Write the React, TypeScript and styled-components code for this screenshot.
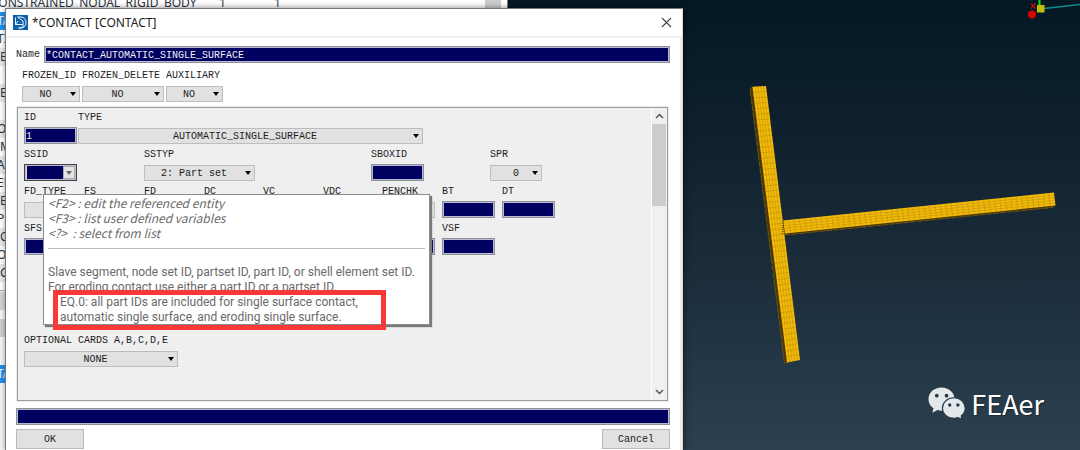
import React, { useId } from "react";
import styled, { createGlobalStyle, css } from "styled-components";

const mono = `"Liberation Mono", monospace`;
const sans = `"Noto Sans", "Open Sans", sans-serif`;
const hintSans = `"Noto Sans CJK SC", "Noto Sans", sans-serif`;
const navy = "#000060";

const GlobalStyle = createGlobalStyle`
  * { box-sizing: border-box; }
  body { margin: 0; background: #051826; }
  input, select, button { font: inherit; color: inherit; border-radius: 0; margin: 0; }
`;

const Desktop = styled.div`
  position: relative;
  min-height: 100vh;
  overflow: hidden;
  display: grid;
  grid-template-columns: 683fr 397fr;
  font: 10px/16px ${mono};
  color: #1c1c1c;
`;

const Backdrop = styled.div`
  position: absolute;
  inset: 0;
  display: grid;
  grid-template-columns: 508fr 572fr;
`;

const Browser = styled.aside`
  display: flex;
  flex-direction: column;
  overflow: hidden;
  background: #fff;
  border-right: 1px solid #777;
  font: 12px/18px ${sans};
  color: #2b3440;
  min-width: 0;
`;

const TreeTable = styled.table`
  border-collapse: collapse;
  width: 100%;
  margin-top: -6px;
`;

const TreeRow = styled.tr<{ $active?: boolean; $shade?: boolean }>`
  height: 18px;
  background: ${(p) => (p.$active ? "#1e90f0" : p.$shade ? "#e9e9e9" : "#fff")};
  color: ${(p) => (p.$active ? "#e4f1ff" : "inherit")};
  td { padding: 0; width: 55px; white-space: nowrap; }
  td:first-child { width: 219px; max-width: 219px; text-indent: -9px; }
  td:last-child { width: auto; }
`;

const TreeText = styled.span<{ $clipped: boolean }>`
  display: block;
  text-indent: ${(p) => (p.$clipped ? -3 : 0)}px;
`;

const TreeFooter = styled.div`
  flex: 1;
  display: flex;
  flex-direction: column;
  margin-top: 8px;
  border-top: 1px solid #aaa;
  background: #f1f5fa;
`;

const FooterBar = styled.div<{ $tone: string; $gapTop: number }>`
  height: 18px;
  margin-top: ${(p) => p.$gapTop}px;
  background: ${(p) => p.$tone};
  color: #e4f1ff;
`;

const BrowserScroll = styled.div`
  position: absolute;
  top: 0;
  left: 485px;
  width: 16px;
  height: 100%;
  background: #cdcdcd;
`;

const Viewport = styled.main`
  position: relative;
  min-width: 0;
  background: linear-gradient(#041725, #172836 50%, #2c404f);
`;

const Scene = styled.svg`
  display: block;
  position: absolute;
  inset: 0;
  width: 100%;
  height: 100%;
`;

const Watermark = styled.div`
  position: absolute;
  right: 36px;
  bottom: 27px;
  display: flex;
  align-items: center;
  gap: 5px;
  font: 27px/38px "Noto Sans CJK SC", sans-serif;
  color: #fff;
  text-shadow: 1px 1px 1px #1a2833;
`;

const Dialog = styled.section`
  position: relative;
  display: flex;
  flex-direction: column;
  margin: 8px 0 0 5px;
  background: #fff;
  border: 1px solid #777;
  border-right-color: #d8d8d8;
  border-bottom: 0;
  box-shadow: 1px 0 6px rgba(0, 0, 0, 0.5);
`;

const TitleBar = styled.header`
  display: flex;
  align-items: center;
  gap: 4px;
  height: 29px;
  padding: 0 10px 0 7px;
  border-bottom: 2px solid #efefef;
  h1 { flex: 1; margin: 0; font: 12px/18px ${sans}; color: #222; }
`;

const CloseButton = styled.button`
  display: flex;
  padding: 0;
  border: 0;
  background: none;
  color: #444;
`;

const DialogBody = styled.form`
  flex: 1;
  display: flex;
  flex-direction: column;
  padding: 8px 10px 1px 10px;
  border-right: 2px solid #eee;
`;

const NameRow = styled.div`
  display: flex;
  align-items: center;
  gap: 4px;
`;

const inputFrame = css`
  display: block;
  height: 17px;
  width: 100%;
  min-width: 0;
  background: ${navy};
  color: #f2f2f2;
  border: 1px solid #8f8f99;
  box-shadow: inset 0 0 0 1px #b9b9d2;
  outline: 0;
`;

const TextInput = styled.input`
  ${inputFrame}
  padding: 2px 1px 0;
`;

const SwitchRow = styled.div`
  display: grid;
  grid-template-columns: 58px 82px 57px;
  gap: 2px;
  margin: 3px 0 0 6px;
`;

const FieldRow = styled.div<{ $columns: string }>`
  display: grid;
  grid-template-columns: ${(p) => p.$columns};
  margin-bottom: 1px;
`;

const FieldBox = styled.div<{ $width: number; $bare?: boolean }>`
  display: flex;
  flex-direction: column;
  justify-content: ${(p) => (p.$bare ? "flex-end" : "flex-start")};
  width: ${(p) => p.$width}px;
  label { height: 19px; line-height: 19px; white-space: nowrap; }
`;

const SelectFrame = styled.span`
  position: relative;
  display: block;
  padding-top: 1px;
  &::after {
    content: "";
    position: absolute;
    right: 4px;
    top: 7px;
    border: 3px solid transparent;
    border-top: 4px solid #000;
    border-bottom: 0;
    pointer-events: none;
  }
`;

const Select = styled.select<{ $numeric?: boolean }>`
  appearance: none;
  display: block;
  width: 100%;
  height: 16px;
  padding: 1px ${(p) => (p.$numeric ? 0 : 11)}px 0 0;
  border: 1px solid #bdbdbd;
  background: #e1e1e1;
  text-align: center;
  text-align-last: center;
  line-height: 13px;
`;

const Combo = styled.span`
  ${inputFrame}
  display: flex;
  align-items: center;
  padding: 0 1px;
  border-color: #444;
  input { flex: 1; width: 0; height: 13px; padding: 0; border: 0; border-left: 1px solid #ddd; background: none; outline: 0; }
  button { display: flex; align-items: center; justify-content: center; width: 12px; height: 13px; padding: 0; border: 1px solid #aaa; background: #e4e4e4; }
`;

const Panel = styled.div`
  display: flex;
  margin: 5px 2px 7px 1px;
  height: 294px;
  background: #efefef;
  border: 1px solid #9c9ca6;
  box-shadow: 0 0 0 1px #ececf0;
`;

const PanelFields = styled.div`
  flex: 1;
  min-width: 0;
  padding: 0 0 0 6px;
`;

const OptionalCards = styled.div`
  margin-top: 76px;
`;

const ScrollTrack = styled.div`
  display: flex;
  flex-direction: column;
  align-items: stretch;
  width: 16px;
  border-left: 1px solid #fff;
  background: #f0f0f0;
`;

const ScrollButton = styled.button`
  display: flex;
  align-items: center;
  justify-content: center;
  height: 16px;
  padding: 0;
  border: 0;
  background: none;
`;

const ScrollThumb = styled.div`
  height: 82px;
  margin-right: 1px;
  margin-bottom: auto;
  background: #cdcdcd;
`;

const Actions = styled.footer`
  display: flex;
  justify-content: space-between;
  margin-top: 4px;
`;

const ActionButton = styled.button`
  width: 68px;
  height: 20px;
  padding: 1px 0 0;
  border: 1px solid #bababa;
  background: #e1e1e1;
`;

const Tooltip = styled.div`
  position: absolute;
  top: 185px;
  left: 37px;
  width: 387px;
  padding: 0 4px;
  height: 131px;
  border: 1px solid #8c8c8c;
  background: #fff;
  box-shadow: 2px 2px 1px #7a7a7a;
  font: 12px/15px Roboto, sans-serif;
  color: #6a6a6a;
  white-space: nowrap;
  p { margin: 0; white-space: pre; }
  hr { margin: 8px 0 16px; border: 0; border-top: 1px solid #bbb; }
`;

const KeyHint = styled.p`
  font: italic 12px/15px ${hintSans};
`;

const Highlight = styled.p`
  position: relative;
  padding-left: 12px;
  &::before {
    content: "";
    position: absolute;
    inset: -5px 39px -5px 5px;
    border: 5px solid #fb3838;
  }
`;

type FieldProps = {
  label: string;
  width?: number;
  options?: string[];
  value?: string;
  combo?: boolean;
  numeric?: boolean;
  bare?: boolean;
};

function Field({ label, width = 53, options, value = "", combo, numeric, bare }: FieldProps) {
  const id = useId();
  return (
    <FieldBox $width={width} $bare={bare}>
      {!bare && <label htmlFor={id}>{label}</label>}
      {options ? (
        <SelectFrame>
          <Select id={id} $numeric={numeric} defaultValue={options[0]}>
            {options.map((o) => <option key={o}>{o}</option>)}
          </Select>
        </SelectFrame>
      ) : combo ? (
        <Combo>
          <input id={id} defaultValue={value} />
          <button type="button" aria-label="Open list">
            <svg width="6" height="4"><path d="M0 0h6L3 4z" fill="#666" /></svg>
          </button>
        </Combo>
      ) : (
        <TextInput id={id} defaultValue={value} aria-label={bare ? label : undefined} />
      )}
    </FieldBox>
  );
}

const treeItems = ["TA", "TI", "B", "", "E", "", "OS", "M", "AI", "EF", "E", "PE", "C", "OV", "G"];
const nineColumns = "60px 60px 60px 59px 60px 59px 60px 60px 53px";

type Pt = [number, number];
const mix = (a: Pt, b: Pt, t: number): Pt => [a[0] + (b[0] - a[0]) * t, a[1] + (b[1] - a[1]) * t];

/* A meshed bar: a0-a1 is one long edge, b0-b1 the other. */
function Beam({ a0, a1, b0, b1, side }: { a0: Pt; a1: Pt; b0: Pt; b1: Pt; side: string }) {
  const strips = 5;
  const cells = 50;
  let d = "";
  for (let i = 1; i < strips; i++) d += `M${mix(a0, b0, i / strips)}L${mix(a1, b1, i / strips)}`;
  for (let i = 1; i < cells; i++) d += `M${mix(a0, a1, i / cells)}L${mix(b0, b1, i / cells)}`;
  return (
    <g>
      <polygon points={side} fill="#4a3705" />
      <polygon points={side} fill="none" stroke="#8f6d08" strokeWidth="0.6" strokeDasharray="6 1" />
      <polygon points={`${a0} ${a1} ${b1} ${b0}`} fill="#f2ba0a" />
      <path d={d} stroke="#8a6a05" strokeOpacity="0.45" strokeWidth="0.6" fill="none" />
    </g>
  );
}

export default function App() {
  return (
    <Desktop>
      <GlobalStyle />
      <Backdrop>
        <Browser>
          <TreeTable>
            <tbody>
              <TreeRow>
                <td>CONSTRAINED_NODAL_RIGID_BODY</td>
                <td>1</td>
                <td>1</td>
              </TreeRow>
              {treeItems.map((t, i) => (
                <TreeRow key={i} $active={i === 0} $shade={i % 2 === 0}>
                  <td><TreeText $clipped={t.length > 1}>{t}</TreeText></td>
                  <td />
                  <td />
                </TreeRow>
              ))}
            </tbody>
          </TreeTable>
          <TreeFooter>
            <FooterBar $tone="#d4d4d4" $gapTop={1} />
            <FooterBar $tone="#cfcfcf" $gapTop={9} />
            <FooterBar $tone="#1e90f0" $gapTop={28}><TreeText $clipped>TA</TreeText></FooterBar>
          </TreeFooter>
          <BrowserScroll />
        </Browser>
        <Viewport>
          <Scene viewBox="508 0 572 450" preserveAspectRatio="xMaxYMin meet" aria-hidden="true">
            <Beam a0={[783, 220.5]} a1={[1054, 192.5]} b0={[785, 233.5]} b1={[1055.5, 205.5]} side="784,232 1054,204 1053,207.5 786,235" />
            <Beam a0={[752.5, 86.7]} a1={[787, 362.5]} b0={[766, 86]} b1={[800, 360]} side="750,89 753,86.7 788,362.5 784.5,363" />
            <path d="M783 221v13" stroke="#6b4f04" strokeWidth="1.5" strokeDasharray="1 1" />
            <path d="M1044 8.5L1080 4.5" stroke="#13898c" strokeWidth="1.5" />
            <path d="M1039.5 0v5" stroke="#14d914" strokeWidth="2" />
            <rect x="1037" y="5" width="7.5" height="7.5" fill="#c4bd08" />
            <circle cx="1032" cy="14.5" r="4" fill="#d60606" />
            <path d="M1031 3.5l4.5 5m0-5l-4.5 5" stroke="#b01010" strokeWidth="1.5" />
          </Scene>
          <Watermark>
            <svg width="38" height="34" viewBox="0 0 39 34" aria-hidden="true">
              <path fill="#e3e8ea" d="M14 0C6.3 0 .5 5.2.5 12c0 3.900 2 7.200 5.100 9.300L4.500 26l5.200-2.900c1.300.4 2.800.7 4.300.7 7.500 0 13.200-5.300 13.200-11.900S21.500 0 14 0z" />
              <path fill="#e3e8ea" stroke="#273947" strokeWidth="1.2" d="M26.500 10.600c6.700 0 11.700 4.800 11.700 10.700 0 3.300-1.600 6.100-4.200 8.100l1 3.600-4.200-2.100c-1.300.5-2.800.8-4.300.8-6.700 0-11.700-4.600-11.700-10.400s5-10.700 11.700-10.700z" />
              <circle cx="9" cy="8.5" r="1.9" fill="#273947" />
              <circle cx="19" cy="8.5" r="1.9" fill="#273947" />
              <circle cx="22.3" cy="18" r="1.7" fill="#273947" />
              <circle cx="30.7" cy="18" r="1.7" fill="#273947" />
            </svg>
            FEAer
          </Watermark>
        </Viewport>
      </Backdrop>

      <Dialog role="dialog" aria-labelledby="dialog-title">
        <TitleBar>
          <svg width="15" height="15" viewBox="0 0 15 15" aria-hidden="true">
            <rect width="15" height="15" fill="#0f5ea8" />
            <path d="M4.500 2H8a5 5.500 0 0 1 0 11H5.500L10 12.500V6L4.500 2M2.500 2.500V9.500H10M2.500 9.500L5 6" fill="none" stroke="#e8f2fb" strokeWidth="1" />
          </svg>
          <h1 id="dialog-title">*CONTACT [CONTACT]</h1>
          <CloseButton type="button" aria-label="Close">
            <svg width="11" height="11" viewBox="0 0 11 11"><path d="M1 1l9 9M10 1l-9 9" stroke="currentColor" strokeWidth="1.1" /></svg>
          </CloseButton>
        </TitleBar>
        <DialogBody>
          <NameRow>
            <label htmlFor="contact-name">Name</label>
            <TextInput id="contact-name" defaultValue="*CONTACT_AUTOMATIC_SINGLE_SURFACE" />
          </NameRow>
          <SwitchRow>
            <Field label="FROZEN_ID" width={58} options={["NO"]} />
            <Field label="FROZEN_DELETE" width={82} options={["NO"]} />
            <Field label="AUXILIARY" width={57} options={["NO"]} />
          </SwitchRow>
          <Panel>
            <PanelFields>
              <FieldRow $columns="54px 345px">
                <Field label="ID" value="1" />
                <Field label="TYPE" width={345} options={["AUTOMATIC_SINGLE_SURFACE"]} />
              </FieldRow>
              <FieldRow $columns="120px 227px 119px 52px">
                <Field label="SSID" combo />
                <Field label="SSTYP" width={111} options={["2: Part set"]} />
                <Field label="SBOXID" />
                <Field label="SPR" width={52} options={["0"]} numeric />
              </FieldRow>
              <FieldRow $columns={nineColumns}>
                <Field label="FD_TYPE" options={[" "]} />
                <Field label="FS" />
                <Field label="FD" />
                <Field label="DC" />
                <Field label="VC" />
                <Field label="VDC" />
                <Field label="PENCHK" options={[" "]} />
                <Field label="BT" />
                <Field label="DT" />
              </FieldRow>
              <FieldRow $columns={nineColumns}>
                <Field label="SFS" />
                {["SFM", "SST", "MST", "SFST", "SFMT", "FSF"].map((l) => <Field key={l} label={l} bare />)}
                <Field label="VSF" />
              </FieldRow>
              <OptionalCards>
                <Field label="OPTIONAL CARDS A,B,C,D,E" width={154} options={["NONE"]} />
              </OptionalCards>
            </PanelFields>
            <ScrollTrack>
              <ScrollButton type="button" aria-label="Scroll up">
                <svg width="9" height="6"><path d="M1 5l3.500-3.500L8 5" fill="none" stroke="#555" strokeWidth="1.5" /></svg>
              </ScrollButton>
              <ScrollThumb />
              <ScrollButton type="button" aria-label="Scroll down">
                <svg width="9" height="6"><path d="M1 1l3.500 3.500L8 1" fill="none" stroke="#555" strokeWidth="1.5" /></svg>
              </ScrollButton>
            </ScrollTrack>
          </Panel>
          <TextInput aria-label="Status" readOnly />
          <Actions>
            <ActionButton type="button">OK</ActionButton>
            <ActionButton type="button">Cancel</ActionButton>
          </Actions>
        </DialogBody>
        <Tooltip role="tooltip">
          <KeyHint>{"<F2> : edit the referenced entity"}</KeyHint>
          <KeyHint>{"<F3> : list user defined variables"}</KeyHint>
          <KeyHint>{"<?>  : select from list"}</KeyHint>
          <hr />
          <p>Slave segment, node set ID, partset ID, part ID, or shell element set ID.</p>
          <p>For eroding contact use either a part ID or a partset ID.</p>
          <Highlight>{"EQ.0: all part IDs are included for single surface contact,\nautomatic single surface, and eroding single surface."}</Highlight>
        </Tooltip>
      </Dialog>
    </Desktop>
  );
}
